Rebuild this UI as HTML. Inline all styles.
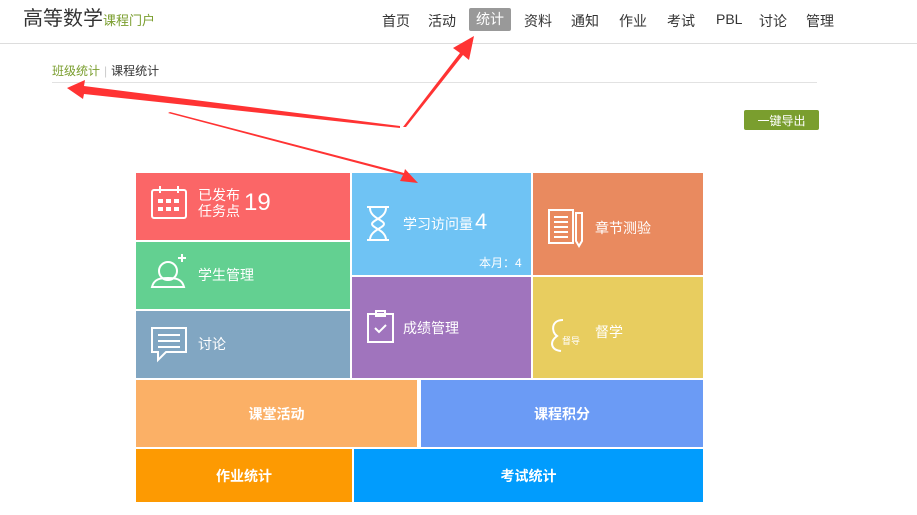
<!DOCTYPE html>
<html><head><meta charset="utf-8"><style>
*{margin:0;padding:0;box-sizing:border-box}
body{width:917px;height:515px;background:#fff;font-family:"Liberation Sans","Noto Sans CJK SC",sans-serif;position:relative;overflow:hidden}
.a{position:absolute}
.nav span{position:absolute;top:11px;font-size:14px;color:#333}
.t{position:absolute;color:#fff;font-size:14px}
.c{display:flex;align-items:center;justify-content:center}
.b{font-size:14px;font-weight:600}
</style></head><body>
<div class="a" style="left:23px;top:2px;font-size:20px;color:#333">高等数学<span style="font-size:13px;color:#7a9e2e">课程门户</span></div>
<div class="nav">
<span style="left:382px">首页</span><span style="left:428px">活动</span>
<span style="left:469px;top:8px;width:42px;height:23px;background:#999;color:#fff;border-radius:2px;text-align:center;line-height:23px">统计</span>
<span style="left:524px">资料</span><span style="left:571px">通知</span><span style="left:619px">作业</span><span style="left:667px">考试</span><span style="left:716px">PBL</span><span style="left:759px">讨论</span><span style="left:806px">管理</span>
</div>
<div class="a" style="left:0;top:43px;width:917px;height:1px;background:#ddd"></div>
<div class="a" style="left:52px;top:62px;font-size:12px;color:#7a9e2e">班级统计<span style="color:#ccc;margin:0 4px">|</span><span style="color:#333">课程统计</span></div>
<div class="a" style="left:52px;top:82px;width:765px;height:1px;background:#e2e2e2"></div>
<div class="a c" style="left:744px;top:110px;width:75px;height:20px;background:#7a9e2e;color:#fff;font-size:12px;border-radius:2px">一键导出</div>

<div class="a" style="left:136px;top:173px;width:214px;height:67px;background:#fb6667"></div>
<div class="a" style="left:136px;top:242px;width:214px;height:67px;background:#63d091"></div>
<div class="a" style="left:136px;top:311px;width:214px;height:67px;background:#81a6c2"></div>
<div class="a" style="left:352px;top:173px;width:179px;height:102px;background:#6fc3f4"></div>
<div class="a" style="left:352px;top:277px;width:179px;height:101px;background:#a074bd"></div>
<div class="a" style="left:533px;top:173px;width:170px;height:102px;background:#e98a5f"></div>
<div class="a" style="left:533px;top:277px;width:170px;height:101px;background:#e8cd5f"></div>
<div class="a c t b" style="left:136px;top:380px;width:281px;height:67px;background:#fbb066">课堂活动</div>
<div class="a c t b" style="left:421px;top:380px;width:282px;height:67px;background:#6b9bf5">课程积分</div>
<div class="a c t b" style="left:136px;top:449px;width:216px;height:53px;background:#fd9a02">作业统计</div>
<div class="a c t b" style="left:354px;top:449px;width:349px;height:53px;background:#019cfd">考试统计</div>

<svg class="a" style="left:0;top:0" width="917" height="515" fill="none" stroke="#fff" stroke-width="2">
<rect x="152" y="190" width="34" height="28" rx="2"/><line x1="160" y1="186" x2="160" y2="193"/><line x1="178" y1="186" x2="178" y2="193"/>
<g fill="#fff" stroke="none"><rect x="158" y="199" width="5" height="4"/><rect x="166" y="199" width="5" height="4"/><rect x="174" y="199" width="5" height="4"/><rect x="158" y="207" width="5" height="4"/><rect x="166" y="207" width="5" height="4"/><rect x="174" y="207" width="5" height="4"/></g>
<circle cx="168" cy="271" r="9"/><path d="M152 287c2-8 8-9 16-9s14 1 16 9z"/><path d="M178 258h8M182 254v8"/>
<path d="M152 328h34v24h-20l-8 8v-8h-6z"/><path d="M158 335h22M158 341h22M158 347h22"/>
<path d="M367 207h22M367 240h22M370 208c0 10 14 12 14 16s-14 6-14 16M386 208c0 10-14 12-14 16s14 6 14 16"/>
<rect x="549" y="210" width="24" height="33"/><path d="M554 217h14M554 222h14M554 227h14M554 232h14M554 237h14"/><path d="M576 213h6v28l-3 5-3-5z"/>
<rect x="368" y="314" width="25" height="28"/><rect x="376" y="311" width="9" height="5"/><path d="M375 328l4 4 7-7"/>
<path d="M563 320c-12 0-12 12-6 16-8 6-6 14 4 15"/>
</svg>
<div class="t" style="left:198px;top:187px;line-height:16px">已发布<br>任务点</div>
<div class="t" style="left:244px;top:189px;font-size:24px">19</div>
<div class="t" style="left:198px;top:265px">学生管理</div>
<div class="t" style="left:198px;top:334px">讨论</div>
<div class="t" style="left:403px;top:214px">学习访问量</div>
<div class="t" style="left:475px;top:209px;font-size:22px">4</div>
<div class="t" style="left:479px;top:254px;font-size:12px">本月：4</div>
<div class="t" style="left:595px;top:218px">章节测验</div>
<div class="t" style="left:403px;top:318px">成绩管理</div>
<div class="t" style="left:562px;top:334px;font-size:9px">督导</div>
<div class="t" style="left:595px;top:322px">督学</div>

<svg class="a" style="left:0;top:0" width="917" height="515" fill="#f33">
<polygon points="403,127 460,53 453,48 474,36 469,60 463,55 406,127"/>
<polygon points="400,128 84,94 83,99 67,88 85,80 84,86 400,126"/>
<polygon points="168,113 403,175 400,181 418,183 405,169 404,173 170,112"/>
</svg>
</body></html>
